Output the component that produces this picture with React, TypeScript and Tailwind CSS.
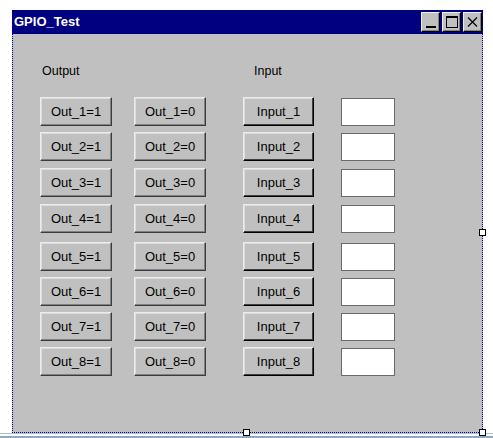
import React from "react";

const rows = [1, 2, 3, 4, 5, 6, 7, 8];

// row pitch as measured in the dialog
const rowClass: Record<number, string> = {
  1: "h-[35px]",
  2: "h-[36px]",
  3: "h-[36px]",
  4: "h-[38px]",
  5: "h-[35px]",
  6: "h-[35px]",
  7: "h-[35px]",
  8: "h-[30px]",
};

function WinButton({ label, strong }: { label: string; strong?: boolean }) {
  return (
    <button
      type="button"
      className={
        "flex h-[29px] w-full items-center justify-center border border-t-[#ececec] border-l-[#ececec] bg-[#c0c0c0] text-[13px] leading-[15px] text-black " +
        (strong
          ? "border-b-black border-r-black shadow-[inset_-1px_-1px_0_#404040,inset_1px_1px_0_#dcdcdc]"
          : "border-b-[#3c3c3c] border-r-[#3c3c3c] shadow-[inset_-1px_-1px_0_#808080,inset_1px_1px_0_#dcdcdc]")
      }
    >
      {label}
    </button>
  );
}

function CaptionButton({ children }: { children: React.ReactNode }) {
  return (
    <div className="flex h-[20px] w-[19px] items-center justify-center border border-t-[#f0f0f0] border-l-[#f0f0f0] border-b-black border-r-black bg-[#c0c0c0] shadow-[inset_-1px_-1px_0_#808080]">
      {children}
    </div>
  );
}

function Handle({ className }: { className: string }) {
  return <div className={"absolute h-[7px] w-[7px] border border-black bg-white " + className} />;
}

export default function App() {
  return (
    <div className="relative h-[438px] w-[493px] overflow-hidden bg-white" style={{ fontFamily: '"Liberation Sans", Arial, sans-serif' }}>
      <div className="ml-[12px] pt-[10px] w-[471px]">
        <div className="flex h-[24px] items-center justify-between bg-[#000080] pl-[2px] pr-[1px]">
          <span className="text-[13px] font-bold text-white">GPIO_Test</span>
          <div className="flex gap-[2px]">
            <CaptionButton>
              <div className="mt-[9px] h-[2px] w-[10px] bg-black" />
            </CaptionButton>
            <CaptionButton>
              <div className="h-[12px] w-[12px] border border-t-2 border-black" />
            </CaptionButton>
            <CaptionButton>
              <svg width="11" height="10" viewBox="0 0 11 10">
                <path d="M1 0.5 L10 9.5 M10 0.5 L1 9.5" stroke="#000" strokeWidth="1.2" fill="none" />
              </svg>
            </CaptionButton>
          </div>
        </div>

        <div className="h-[399px] border-x border-b border-dotted border-x-[#000080] border-b-[#000080] bg-[#c0c0c0]">
          <div className="flex pt-[30px] text-[12.5px] leading-[15px] text-black">
            <span className="ml-[29px] w-[212px]">Output</span>
            <span>Input</span>
          </div>

          <div className="mt-[18px] flex flex-col pl-[27px]">
            {rows.map((n) => (
              <div key={n} className={"flex items-start " + rowClass[n]}>
                <div className="w-[72px]">
                  <WinButton label={`Out_${n}=1`} />
                </div>
                <div className="ml-[22px] w-[72px]">
                  <WinButton label={`Out_${n}=0`} />
                </div>
                <div className="ml-[37px] w-[71px]">
                  <WinButton label={`Input_${n}`} strong />
                </div>
                <div className="ml-[27px] mt-px h-[28px] w-[54px] border border-[#6a6a6a] bg-white" />
              </div>
            ))}
          </div>
        </div>
      </div>

      <div className="h-px w-full bg-[#a9c0d6]" />
      <div className="mt-[2px] h-[2px] w-full bg-[#8ea8c0]" />

      <Handle className="left-[479px] top-[229px]" />
      <Handle className="left-[243px] top-[429px]" />
      <Handle className="left-[479px] top-[429px]" />
    </div>
  );
}
